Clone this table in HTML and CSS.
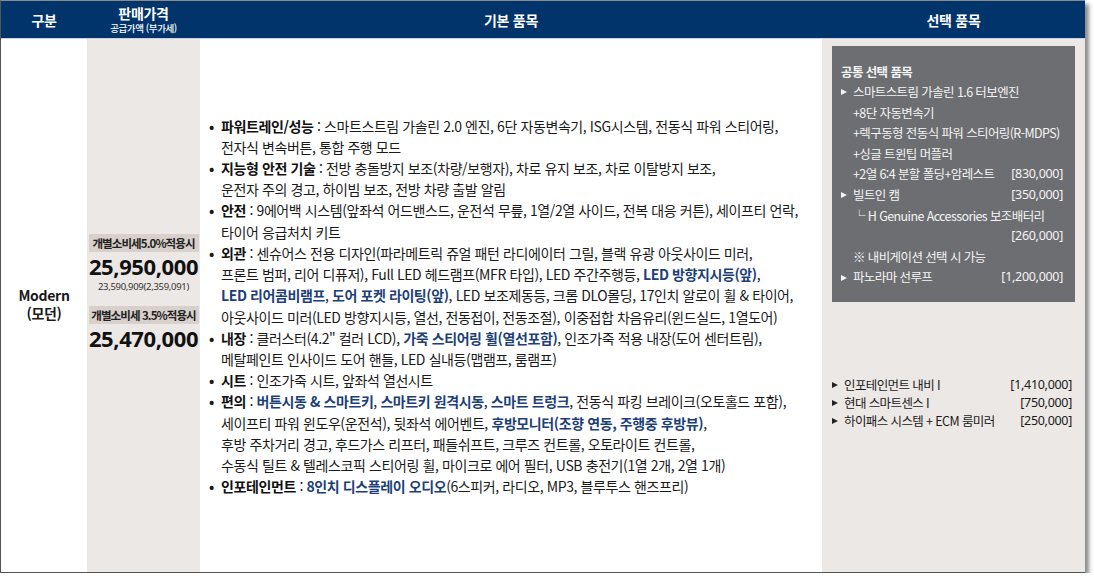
FILE: index.html
```html
<!DOCTYPE html>
<html lang="ko">
<head>
<meta charset="utf-8">
<link rel="stylesheet" href="styles.css">
</head>
<body>
<div class="frame">
  <div class="head">
    <div class="hcell">구분</div>
    <div class="hcell price-h"><span class="h-main">판매가격</span><span class="h-sub">공급가액 (부가세)</span></div>
    <div class="hcell">기본 품목</div>
    <div class="hcell">선택 품목</div>
  </div>
  <div class="body">
    <div class="col col-trim"><div class="trim">Modern<br>(모던)</div></div>
    <div class="col col-price">
      <div class="tax">개별소비세5.0%적용시</div>
      <div class="amount">25,950,000</div>
      <div class="supply">23,590,909(2,359,091)</div>
      <div class="tax tax2">개별소비세 3.5%적용시</div>
      <div class="amount">25,470,000</div>
    </div>
    <div class="col col-basic">
      <ul class="items">
        <li><span class="dot">•</span><div><b>파워트레인/성능</b> : 스마트스트림 가솔린 2.0 엔진, 6단 자동변속기, ISG시스템, 전동식 파워 스티어링,<br>전자식 변속버튼, 통합 주행 모드</div></li>
        <li><span class="dot">•</span><div><b>지능형 안전 기술</b> : 전방 충돌방지 보조(차량/보행자), 차로 유지 보조, 차로 이탈방지 보조,<br>운전자 주의 경고, 하이빔 보조, 전방 차량 출발 알림</div></li>
        <li><span class="dot">•</span><div><b>안전</b> : 9에어백 시스템(앞좌석 어드밴스드, 운전석 무릎, 1열/2열 사이드, 전복 대응 커튼), 세이프티 언락,<br>타이어 응급처치 키트</div></li>
        <li><span class="dot">•</span><div><b>외관</b> : 센슈어스 전용 디자인(파라메트릭 쥬얼 패턴 라디에이터 그릴, 블랙 유광 아웃사이드 미러,<br>프론트 범퍼, 리어 디퓨저), Full LED 헤드램프(MFR 타입), LED 주간주행등, <b class="hl">LED 방향지시등(앞)</b>,<br><b class="hl">LED 리어콤비램프</b>, <b class="hl">도어 포켓 라이팅(앞)</b>, LED 보조제동등, 크롬 DLO몰딩, 17인치 알로이 휠 &amp; 타이어,<br>아웃사이드 미러(LED 방향지시등, 열선, 전동접이, 전동조절), 이중접합 차음유리(윈드실드, 1열도어)</div></li>
        <li><span class="dot">•</span><div><b>내장</b> : 클러스터(4.2" 컬러 LCD), <b class="hl">가죽 스티어링 휠(열선포함)</b>, 인조가죽 적용 내장(도어 센터트림),<br>메탈페인트 인사이드 도어 핸들, LED 실내등(맵램프, 룸램프)</div></li>
        <li><span class="dot">•</span><div><b>시트</b> : 인조가죽 시트, 앞좌석 열선시트</div></li>
        <li><span class="dot">•</span><div><b>편의</b> : <b class="hl">버튼시동 &amp; 스마트키</b>, <b class="hl">스마트키 원격시동</b>, <b class="hl">스마트 트렁크</b>, 전동식 파킹 브레이크(오토홀드 포함),<br>세이프티 파워 윈도우(운전석), 뒷좌석 에어벤트, <b class="hl">후방모니터(조향 연동, 주행중 후방뷰)</b>,<br>후방 주차거리 경고, 후드가스 리프터, 패들쉬프트, 크루즈 컨트롤, 오토라이트 컨트롤,<br>수동식 틸트 &amp; 텔레스코픽 스티어링 휠, 마이크로 에어 필터, USB 충전기(1열 2개, 2열 1개)</div></li>
        <li><span class="dot">•</span><div><b>인포테인먼트</b> : <b class="hl">8인치 디스플레이 오디오</b>(6스피커, 라디오, MP3, 블루투스 핸즈프리)</div></li>
      </ul>
    </div>
    <div class="col col-opt">
      <div class="optbox">
        <div class="opt-title">공통 선택 품목</div>
        <div class="orow"><span class="tri"></span><span>스마트스트림 가솔린 1.6 터보엔진</span></div>
        <div class="orow sub"><span>+8단 자동변속기</span></div>
        <div class="orow sub"><span>+렉구동형 전동식 파워 스티어링(R-MDPS)</span></div>
        <div class="orow sub"><span>+싱글 트윈팁 머플러</span></div>
        <div class="orow sub"><span>+2열 6:4 분할 폴딩+암레스트</span><span class="pr">[830,000]</span></div>
        <div class="orow"><span class="tri"></span><span>빌트인 캠</span><span class="pr">[350,000]</span></div>
        <div class="orow sub"><span>└ H Genuine Accessories 보조배터리</span></div>
        <div class="orow sub"><span class="pr">[260,000]</span></div>
        <div class="orow sub"><span>※ 내비게이션 선택 시 가능</span></div>
        <div class="orow"><span class="tri"></span><span>파노라마 선루프</span><span class="pr">[1,200,000]</span></div>
      </div>
      <div class="optlist">
        <div class="lrow"><span class="tri dark"></span><span>인포테인먼트 내비 I</span><span class="pr">[1,410,000]</span></div>
        <div class="lrow"><span class="tri dark"></span><span>현대 스마트센스 I</span><span class="pr">[750,000]</span></div>
        <div class="lrow"><span class="tri dark"></span><span>하이패스 시스템 + ECM 룸미러</span><span class="pr">[250,000]</span></div>
      </div>
    </div>
  </div>
</div>
</body>
</html>
```

FILE: styles.css
```css
* { box-sizing: border-box; }
html, body { margin: 0; padding: 0; background: #ffffff; }
body {
  font-family: "Noto Sans CJK KR", "Noto Sans", sans-serif;
  color: #1a1a1a;
}
.frame {
  width: 1085px;
  height: 573px;
  border-left: 1px solid #555;
  border-bottom: 1px solid #555;
  border-top: 1px solid #8a8a8a;
  box-shadow: 4px 4px 4px rgba(0,0,0,0.45);
  display: flex;
  flex-direction: column;
  background: #fff;
}
.head {
  display: grid;
  grid-template-columns: 86px 113px 622px 263px;
  height: 38px;
  background: #00346a;
  border-bottom: 1px solid #c9d3e2;
  color: #fff;
}
.hcell {
  display: flex;
  align-items: center;
  justify-content: center;
  font-size: 14px;
  font-weight: 700;
  letter-spacing: -0.3px;
}
.price-h { flex-direction: column; justify-content: flex-start; padding-top: 4px; }
.h-main { font-size: 14px; font-weight: 700; line-height: 17px; }
.h-sub { font-size: 9.5px; font-weight: 500; line-height: 12px; letter-spacing: -0.4px; }
.body {
  flex: 1;
  display: grid;
  grid-template-columns: 86px 113px 622px 263px;
}
.col { display: flex; flex-direction: column; }
.col-trim { align-items: center; justify-content: center; padding-bottom: 4px; }
.trim {
  font-size: 14px;
  font-weight: 700;
  line-height: 18px;
  text-align: center;
  letter-spacing: -0.3px;
}
.col-price {
  background: #ece8e5;
  align-items: center;
  justify-content: center;
  padding: 0 2px;
  padding-bottom: 28px;
}
.tax {
  background: #d7d0cb;
  width: 110px;
  height: 18px;
  line-height: 18px;
  font-size: 11.5px;
  font-weight: 700;
  text-align: center;
  letter-spacing: -0.9px;
  color: #222;
}
.tax2 { margin-top: 14px; }
.amount {
  font-family: "Noto Sans", sans-serif;
  font-size: 22px;
  font-weight: 700;
  line-height: 24px;
  margin-top: 2px;
  letter-spacing: -0.4px;
  color: #111;
}
.supply {
  font-family: "Noto Sans", sans-serif;
  font-size: 9.5px;
  line-height: 11px;
  margin-top: 3px;
  color: #333;
  letter-spacing: -0.3px;
}
.col-basic { justify-content: center; padding-left: 8px; padding-top: 2px; }
.items { list-style: none; margin: 0; padding: 0; }
.items li {
  display: flex;
  font-size: 14px;
  line-height: 21.2px;
  letter-spacing: -0.4px;
  color: #1a1a1a;
}
.dot { width: 13px; flex: none; text-align: left; padding-left: 1px; font-weight: 700; }
.items b { font-weight: 700; color: #111; }
.items b.hl { color: #1d3f78; }
.col-opt {
  background: #ece8e5;
  padding: 7px 10px 0 10px;
}
.optbox {
  background: #6d6e71;
  color: #f4f4f4;
  height: 256px;
  padding: 16px 12px 0 9px;
  font-size: 12.5px;
  letter-spacing: -0.6px;
  white-space: nowrap;
}
.opt-title { font-weight: 700; line-height: 20px; margin-bottom: 0; }
.orow {
  display: flex;
  align-items: center;
  line-height: 20.6px;
}
.orow.sub { padding-left: 12px; }
.pr { margin-left: auto; font-family: "Noto Sans", sans-serif; letter-spacing: -0.3px; }
.tri {
  width: 0; height: 0;
  border-left: 6px solid #f4f4f4;
  border-top: 3.5px solid transparent;
  border-bottom: 3.5px solid transparent;
  margin-right: 6px;
  flex: none;
}
.tri.dark { border-left-color: #222; }
.optlist {
  margin-top: 74px;
  padding: 0 3px 0 0;
  font-size: 12.5px;
  letter-spacing: -0.6px;
  color: #1a1a1a;
  white-space: nowrap;
}
.lrow { display: flex; align-items: center; line-height: 18px; }
```
